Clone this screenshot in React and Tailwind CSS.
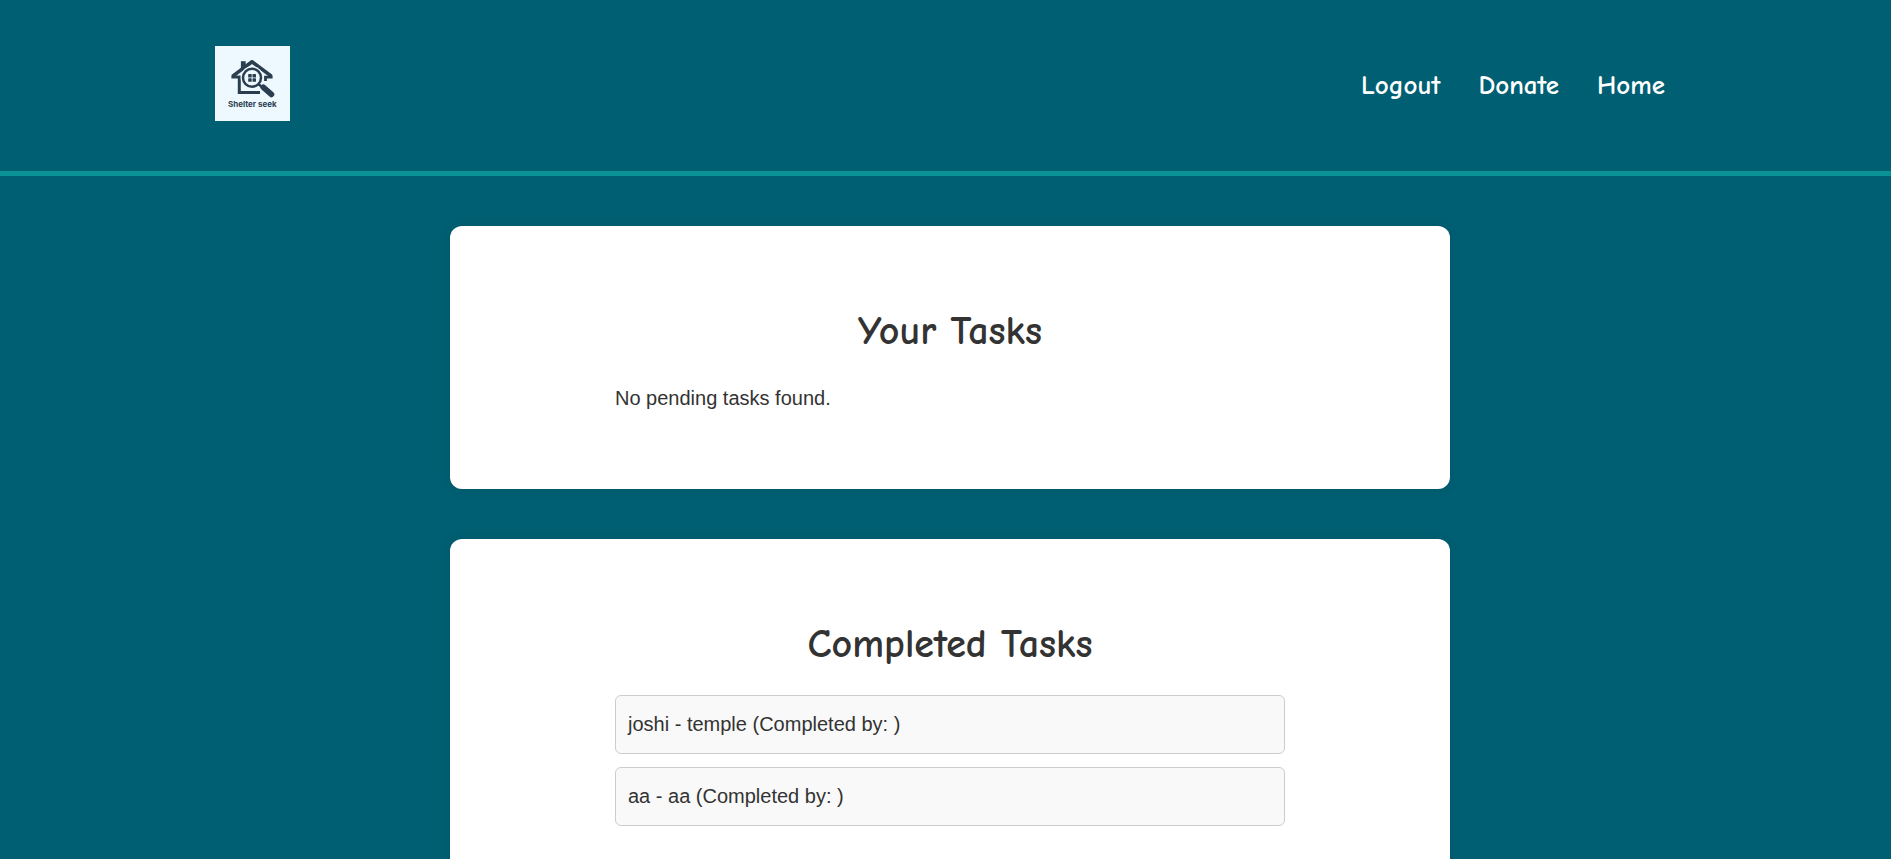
const completed = ["joshi - temple (Completed by: )", "aa - aa (Completed by: )"];
const links = ["Logout", "Donate", "Home"];

function Logo() {
  return (
    <svg viewBox="0 0 75 75" className="block size-[75px]" role="img" aria-label="Shelter seek">
      <rect width="75" height="75" fill="#eef8ff" />
      <g fill="none" stroke="#2b3e50">
        <path d="M28.3 23V15.2" strokeWidth="4.8" />
        <path d="M17.4 30.4L37 15.8L56.6 30.4" strokeWidth="3.6" strokeLinejoin="round" />
        <path d="M16.4 31H24.3V46.6H45" strokeWidth="3" />
        <path d="M57.6 31.2H50.5V35" strokeWidth="2.8" />
        <circle cx="37" cy="31.7" r="11.4" fill="#eef8ff" stroke="none" />
        <circle cx="37" cy="31.7" r="9" strokeWidth="2.5" />
        <path d="M47.8 41L56.5 48.6" stroke="#eef8ff" strokeWidth="8.4" strokeLinecap="round" />
        <path d="M43.4 38L48 42" strokeWidth="2.4" />
        <path d="M48.4 41.4L56.4 48.4" strokeWidth="5.8" strokeLinecap="round" />
      </g>
      <g fill="#2b3e50">
        <rect x="33.2" y="28" width="3.5" height="3.5" rx=".6" />
        <rect x="37.5" y="28" width="3.5" height="3.5" rx=".6" />
        <rect x="33.2" y="32.3" width="3.5" height="3.5" rx=".6" />
        <rect x="37.5" y="32.3" width="3.5" height="3.5" rx=".6" />
        <text x="37.3" y="60.8" fontSize="8" fontWeight="700" textAnchor="middle" className="font-['Inter',sans-serif]">
          Shelter seek
        </text>
      </g>
    </svg>
  );
}

function Card({ title, children }) {
  return (
    <section className="w-full max-w-[1000px] rounded-xl bg-white px-6 pt-20 pb-[74px] shadow-[0_0_12px_rgba(0,0,0,0.1)]">
      <div className="mx-auto max-w-[670px]">
        <h2 className="mb-[26px] text-center font-['Comic_Sans_MS','Comic_Neue','Open_Sans',sans-serif] text-[40px] leading-[50px] font-bold">
          {title}
        </h2>
        {children}
      </div>
    </section>
  );
}

export default function App() {
  return (
    <div className="min-h-screen bg-[#005f73] font-['Liberation_Sans',Arial,sans-serif] text-xl leading-[33px] text-[#333]">
      <header className="border-b-5 border-[#0a9396] pl-[9px]">
        <div className="mx-auto flex max-w-[1470px] items-start justify-between pt-[46px] pb-[50px] pr-5">
          <a href="#home"><Logo /></a>
          <nav className="flex gap-[38px] pt-[22px] font-['Comic_Sans_MS','Comic_Neue','Open_Sans',sans-serif] text-[27px] leading-[36px] font-bold text-white">
            {links.map((l) => <a key={l} href={"#" + l.toLowerCase()}>{l}</a>)}
          </nav>
        </div>
      </header>
      <main className="flex flex-col items-center gap-[50px] py-[50px] pl-[9px]">
        <Card title="Your Tasks">
          <p>No pending tasks found.</p>
        </Card>
        <Card title="Completed Tasks">
          <ul className="flex flex-col gap-[13px]">
            {completed.map((t) => (
              <li key={t} className="rounded-md border border-[#ccc] bg-[#f9f9f9] px-3 py-3">{t}</li>
            ))}
          </ul>
        </Card>
      </main>
    </div>
  );
}
